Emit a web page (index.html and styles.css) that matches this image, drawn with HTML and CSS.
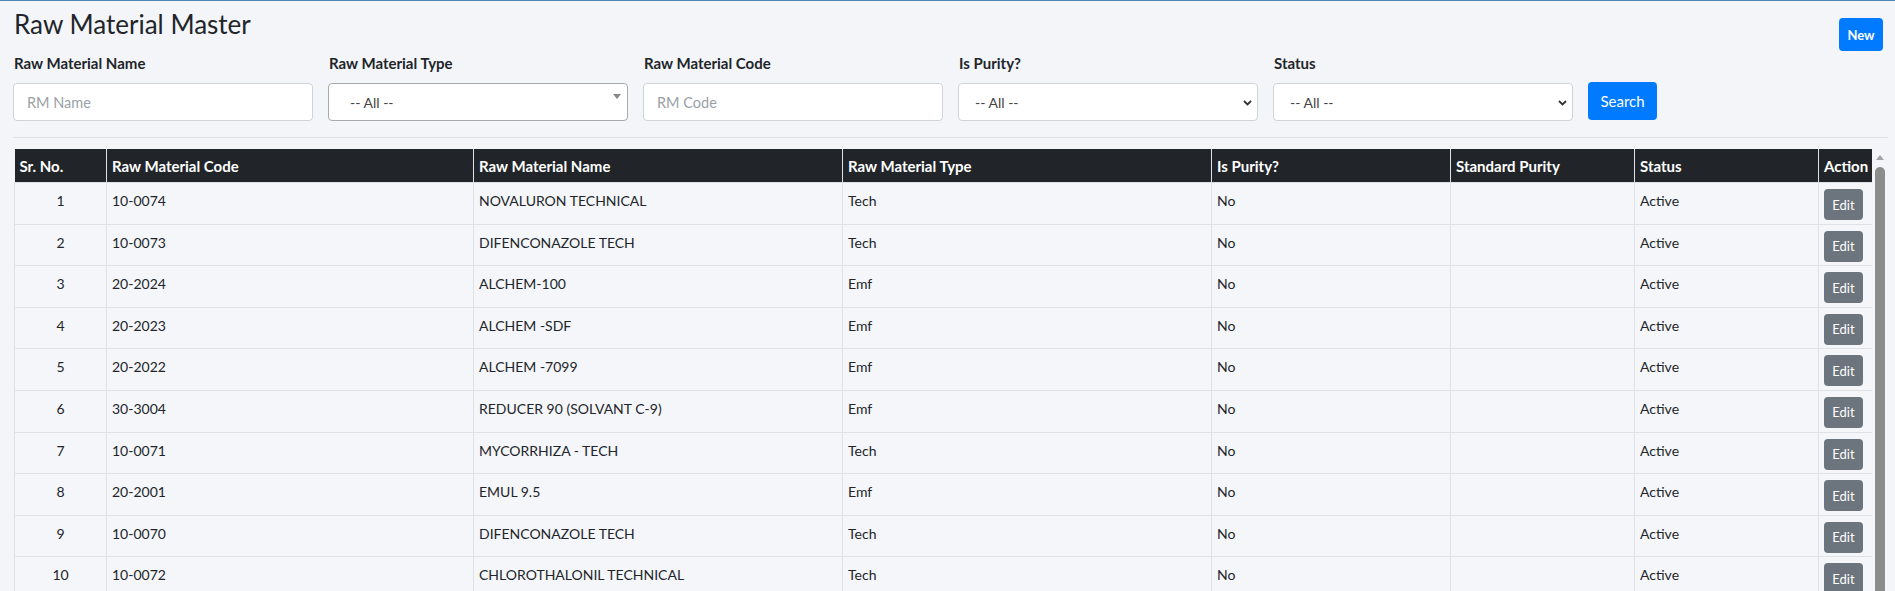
FILE: index.html
```html
<!DOCTYPE html>
<html lang="en">
<head>
<meta charset="utf-8">
<title>Raw Material Master</title>
<link rel="stylesheet" href="styles.css">
</head>
<body>
<div class="page">
  <div class="header">
    <h1 class="title">Raw Material Master</h1>
    <button class="btn btn-primary btn-new">New</button>
  </div>

  <div class="filters">
    <div class="field">
      <label class="label">Raw Material Name</label>
      <input class="control" type="text" placeholder="RM Name">
    </div>
    <div class="field">
      <label class="label">Raw Material Type</label>
      <div class="select2">
        <span class="select2-text">-- All --</span>
        <span class="select2-arrow"></span>
      </div>
    </div>
    <div class="field">
      <label class="label">Raw Material Code</label>
      <input class="control" type="text" placeholder="RM Code">
    </div>
    <div class="field">
      <label class="label">Is Purity?</label>
      <div class="select-wrap">
        <select class="control select"><option>-- All --</option></select>
        <svg class="chev" width="9" height="6" viewBox="0 0 9 6"><path d="M1 1l3.5 3.5L8 1" fill="none" stroke="#333" stroke-width="1.8"/></svg>
      </div>
    </div>
    <div class="field">
      <label class="label">Status</label>
      <div class="select-wrap">
        <select class="control select"><option>-- All --</option></select>
        <svg class="chev" width="9" height="6" viewBox="0 0 9 6"><path d="M1 1l3.5 3.5L8 1" fill="none" stroke="#333" stroke-width="1.8"/></svg>
      </div>
    </div>
    <button class="btn btn-primary btn-search">Search</button>
  </div>

  <hr class="divider">

  <div class="table-area">
    <div class="table-scroll">
      <table class="grid">
        <colgroup>
          <col class="c-sr"><col class="c-code"><col class="c-name"><col class="c-type">
          <col class="c-pur"><col class="c-std"><col class="c-status"><col class="c-action">
        </colgroup>
        <thead>
          <tr>
            <th>Sr. No.</th><th>Raw Material Code</th><th>Raw Material Name</th><th>Raw Material Type</th>
            <th>Is Purity?</th><th>Standard Purity</th><th>Status</th><th>Action</th>
          </tr>
        </thead>
        <tbody>
          <tr><td class="num">1</td><td>10-0074</td><td>NOVALURON TECHNICAL</td><td>Tech</td><td>No</td><td></td><td>Active</td><td><button class="btn btn-edit">Edit</button></td></tr>
          <tr><td class="num">2</td><td>10-0073</td><td>DIFENCONAZOLE TECH</td><td>Tech</td><td>No</td><td></td><td>Active</td><td><button class="btn btn-edit">Edit</button></td></tr>
          <tr><td class="num">3</td><td>20-2024</td><td>ALCHEM-100</td><td>Emf</td><td>No</td><td></td><td>Active</td><td><button class="btn btn-edit">Edit</button></td></tr>
          <tr><td class="num">4</td><td>20-2023</td><td>ALCHEM -SDF</td><td>Emf</td><td>No</td><td></td><td>Active</td><td><button class="btn btn-edit">Edit</button></td></tr>
          <tr><td class="num">5</td><td>20-2022</td><td>ALCHEM -7099</td><td>Emf</td><td>No</td><td></td><td>Active</td><td><button class="btn btn-edit">Edit</button></td></tr>
          <tr><td class="num">6</td><td>30-3004</td><td>REDUCER 90 (SOLVANT C-9)</td><td>Emf</td><td>No</td><td></td><td>Active</td><td><button class="btn btn-edit">Edit</button></td></tr>
          <tr><td class="num">7</td><td>10-0071</td><td>MYCORRHIZA - TECH</td><td>Tech</td><td>No</td><td></td><td>Active</td><td><button class="btn btn-edit">Edit</button></td></tr>
          <tr><td class="num">8</td><td>20-2001</td><td>EMUL 9.5</td><td>Emf</td><td>No</td><td></td><td>Active</td><td><button class="btn btn-edit">Edit</button></td></tr>
          <tr><td class="num">9</td><td>10-0070</td><td>DIFENCONAZOLE TECH</td><td>Tech</td><td>No</td><td></td><td>Active</td><td><button class="btn btn-edit">Edit</button></td></tr>
          <tr><td class="num">10</td><td>10-0072</td><td>CHLOROTHALONIL TECHNICAL</td><td>Tech</td><td>No</td><td></td><td>Active</td><td><button class="btn btn-edit">Edit</button></td></tr>
        </tbody>
      </table>
    </div>
    <div class="scrollbar">
      <span class="scroll-up"></span>
      <span class="scroll-thumb"></span>
    </div>
  </div>
</div>
</body>
</html>
```

FILE: styles.css
```css
* { box-sizing: border-box; }
html, body {
  margin: 0;
  padding: 0;
  height: 100%;
  overflow: hidden;
  background: #f4f5f9;
}
body {
  font-family: Lato, "Open Sans", sans-serif;
  color: #212529;
  font-size: 14px;
}
.page {
  border-top: 1px solid #4f86b8;
  padding: 7px 7px 0 13px;
}
.header {
  display: flex;
  justify-content: space-between;
  align-items: flex-start;
  height: 43px;
}
.title {
  margin: 0 0 0 1px;
  font-size: 26px;
  font-weight: 400;
  line-height: 32px;
  color: #212529;
}
.btn {
  font-family: Lato, "Open Sans", sans-serif;
  border: 0;
  border-radius: 4px;
  color: #fff;
  cursor: pointer;
  padding: 0;
}
.btn-primary { background: #007bff; }
.btn-new {
  margin-top: 10px;
  margin-right: 5px;
  width: 44px;
  height: 33px;
  font-size: 13px;
  font-weight: 700;
}
.filters {
  display: flex;
  align-items: flex-end;
  gap: 15px;
  margin-top: 2px;
}
.field {
  width: 300px;
  display: flex;
  flex-direction: column;
}
.label {
  font-size: 15px;
  font-weight: 700;
  line-height: 21px;
  margin: 0 0 9px 1px;
}
.control {
  width: 100%;
  height: 38px;
  border: 1px solid #ced4da;
  border-radius: 4px;
  background: #fff;
  font-family: Lato, "Open Sans", sans-serif;
  font-size: 14.5px;
  color: #495057;
  padding: 0 13px;
  outline: none;
}
.control::placeholder { color: #9a9fa5; }
.select-wrap { position: relative; }
.select {
  appearance: none;
  -webkit-appearance: none;
  padding-left: 16px;
  font-size: 14px;
  color: #444;
}
.chev {
  position: absolute;
  right: 6px;
  top: 17px;
}
.select2 {
  position: relative;
  height: 38px;
  border: 1px solid #aaa;
  border-radius: 4px;
  background: #fff;
  display: flex;
  align-items: center;
  padding-left: 21px;
  font-size: 14px;
  color: #444;
}
.select2-arrow {
  position: absolute;
  right: 6px;
  top: 10px;
  width: 0;
  height: 0;
  border-left: 4px solid transparent;
  border-right: 4px solid transparent;
  border-top: 5px solid #888;
}
.btn-search {
  width: 69px;
  height: 38px;
  margin-bottom: 1px;
  font-size: 15px;
}
.divider {
  border: 0;
  border-top: 1px solid #dfe2e6;
  margin: 16px 0 0 0;
}
.table-area {
  display: flex;
  margin: 11px 0 0 1px;
  height: 470px;
}
.table-scroll {
  flex: 1;
  overflow: hidden;
}
.scrollbar {
  width: 16px;
  flex: none;
  display: flex;
  flex-direction: column;
  align-items: center;
  padding-top: 6px;
}
.scroll-up {
  width: 0;
  height: 0;
  border-left: 4px solid transparent;
  border-right: 4px solid transparent;
  border-bottom: 5px solid #a3a3a3;
  margin-bottom: 7px;
}
.scroll-thumb {
  flex: 1;
  width: 10px;
  background: #8c8c8c;
  border-radius: 5px 5px 0 0;
}
.grid {
  width: 1858px;
  table-layout: fixed;
  border-collapse: collapse;
}
.c-sr { width: 92px; }
.c-code { width: 367px; }
.c-name { width: 369px; }
.c-type { width: 369px; }
.c-pur { width: 239px; }
.c-std { width: 184px; }
.c-status { width: 184px; }
.c-action { width: 54px; }
.grid th {
  background: #212529;
  color: #fff;
  font-size: 15px;
  font-weight: 700;
  line-height: 21px;
  text-align: left;
  padding: 7px 5px 5px;
  border: 1px solid #dee2e6;
  border-top: 0;
  white-space: nowrap;
}
.grid th:first-child { border-left: 0; }
.grid td {
  font-size: 14px;
  line-height: 24px;
  padding: 6px 5px 3.6px;
  vertical-align: top;
  border: 1px solid #dee2e6;
  background: #f5f6fa;
}
.grid td.num { text-align: center; }
.btn-edit {
  background: #6c757d;
  width: 39px;
  height: 31px;
  font-size: 13px;
}
```
